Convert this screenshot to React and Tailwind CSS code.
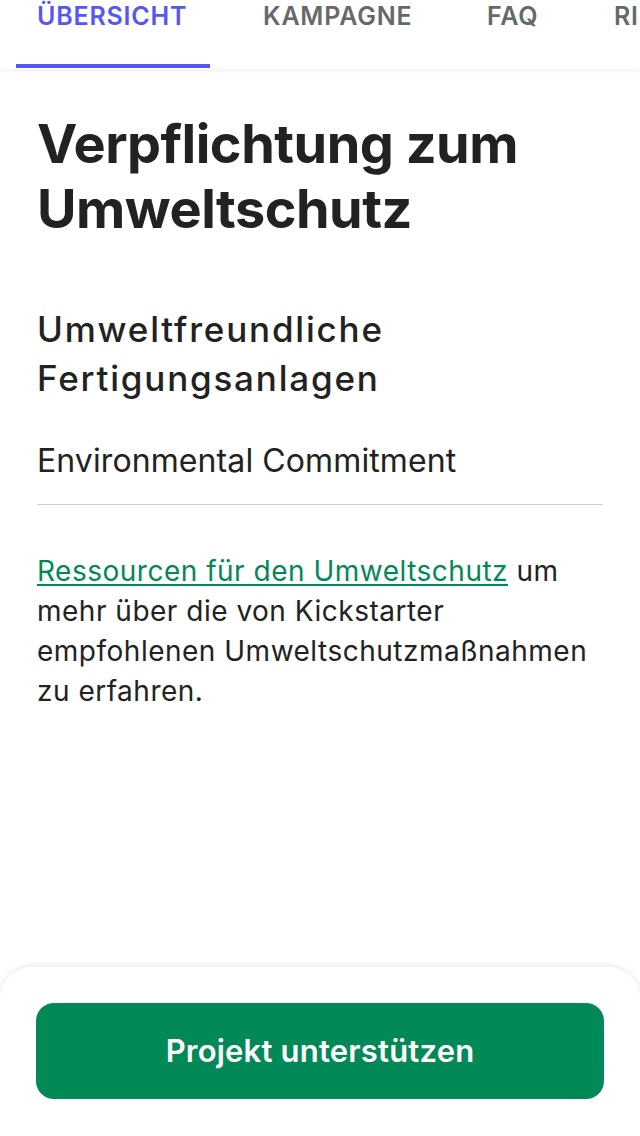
const tabs = [
  { label: 'ÜBERSICHT', w: 'w-[226px]' },
  { label: 'KAMPAGNE', w: 'w-[224px]' },
  { label: 'FAQ', w: 'w-[127px]' },
  { label: 'RISIKEN', w: 'w-[160px]' },
]

export default function App() {
  return (
    <div className="relative h-[1136px] w-[640px] overflow-hidden bg-white font-['Inter',sans-serif] text-[#222222]">
      <header className="relative z-10 h-[69px] bg-white shadow-[0_2px_4px_rgba(0,0,0,0.06)]">
        <nav className="flex whitespace-nowrap pl-[37px]">
          {tabs.map((t, i) => (
            <div
              key={t.label}
              className={
                'relative shrink-0 pt-[1px] text-[25px] font-semibold leading-[30px] tracking-[0.8px] ' +
                t.w +
                (i === 0 ? ' text-[#5656f5]' : ' text-[#656969]')
              }
            >
              {t.label}
              {i === 0 && <span className="absolute left-[-21px] top-[64px] h-[4px] w-[194px] bg-[#5656f5]" />}
            </div>
          ))}
        </nav>
      </header>

      <main className="px-[37px] pt-[42px]">
        <h1 className="text-[54px] font-bold leading-[65px] tracking-[-0.5px]">
          Verpflichtung zum
          <br />
          Umweltschutz
        </h1>
        <h2 className="mt-[64px] text-[35px] font-medium leading-[49px] tracking-[1.8px]">
          Umweltfreundliche
          <br />
          Fertigungsanlagen
        </h2>
        <p className="mt-[36px] text-[32px] leading-[44px] tracking-[0.1px]">Environmental Commitment</p>
        <div className="mt-[21px] h-px bg-[#cfcfcf]" />
        <p className="mt-[46px] text-[28px] leading-[40px] tracking-[0.5px]">
          <a href="#" className="text-[#028858] underline decoration-[2px] underline-offset-[3px]">
            Ressourcen für den Umweltschutz
          </a>{' '}
          um mehr über die von Kickstarter empfohlenen Umweltschutzmaßnahmen zu erfahren.
        </p>
      </main>

      <footer className="absolute bottom-0 left-0 right-0 h-[169px] rounded-t-[32px] bg-white px-[36px] pt-[36px] shadow-[0_-2px_6px_rgba(0,0,0,0.08)]">
        <button className="flex h-[96px] w-full items-center justify-center rounded-[18px] bg-[#038858] text-[31px] font-semibold tracking-[0.2px] text-white">
          Projekt unterstützen
        </button>
      </footer>
    </div>
  )
}
